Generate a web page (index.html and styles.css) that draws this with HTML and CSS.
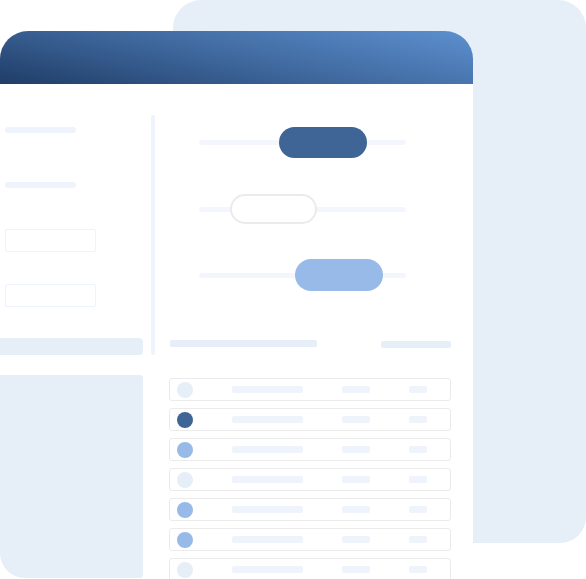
FILE: index.html
```html
<!DOCTYPE html>
<html>
<head>
<meta charset="utf-8">
<link rel="stylesheet" href="styles.css">
</head>
<body>
<div class="stage">
  <div class="back-panel"></div>
  <div class="window">
    <div class="window-header"></div>
    <div class="window-body">
      <aside class="sidebar">
        <div class="side-col">
          <div class="side-line first"></div>
          <div class="side-line"></div>
          <div class="side-input first-input"></div>
          <div class="side-input"></div>
          <div class="side-active"></div>
          <div class="side-panel"></div>
        </div>
        <div class="divider"></div>
      </aside>
      <main class="content">
        <div class="sliders">
          <div class="slider s1"><div class="pill dark"></div></div>
          <div class="slider s2"><div class="pill outline"></div></div>
          <div class="slider s3"><div class="pill light"></div></div>
        </div>
        <div class="table-head">
          <div class="th-bar wide"></div>
          <div class="th-bar narrow"></div>
        </div>
        <div class="rows">
          <div class="row"><span class="dot pale"></span><span class="cell c1"></span><span class="cell c2"></span><span class="cell c3"></span></div>
          <div class="row"><span class="dot dark"></span><span class="cell c1"></span><span class="cell c2"></span><span class="cell c3"></span></div>
          <div class="row"><span class="dot mid"></span><span class="cell c1"></span><span class="cell c2"></span><span class="cell c3"></span></div>
          <div class="row"><span class="dot pale"></span><span class="cell c1"></span><span class="cell c2"></span><span class="cell c3"></span></div>
          <div class="row"><span class="dot mid"></span><span class="cell c1"></span><span class="cell c2"></span><span class="cell c3"></span></div>
          <div class="row"><span class="dot mid"></span><span class="cell c1"></span><span class="cell c2"></span><span class="cell c3"></span></div>
          <div class="row"><span class="dot pale"></span><span class="cell c1"></span><span class="cell c2"></span><span class="cell c3"></span></div>
        </div>
      </main>
    </div>
  </div>
</div>
</body>
</html>
```

FILE: styles.css
```css
html, body {
  margin: 0;
  padding: 0;
  background: #ffffff;
  overflow: hidden;
  font-family: "Liberation Sans", Arial, sans-serif;
}

.stage {
  position: relative;
  width: 586px;
  height: 579px;
  overflow: hidden;
}

.back-panel {
  position: absolute;
  left: 173px;
  top: 0;
  width: 413px;
  height: 543px;
  background: #e6eef8;
  border-radius: 28px 28px 26px 0;
}

.window {
  position: absolute;
  left: 0;
  top: 31px;
  width: 473px;
  height: 560px;
  background: #ffffff;
  border-radius: 28px 28px 0 0;
}

.window-header {
  height: 53px;
  border-radius: 28px 28px 0 0;
  background: linear-gradient(12deg, #1f3d67 0%, #3d659a 45%, #5d90d0 100%);
}

.window-body {
  display: flex;
}

.sidebar {
  display: flex;
  width: 155px;
  flex-shrink: 0;
}

.side-col {
  width: 143px;
  display: flex;
  flex-direction: column;
}

.side-line {
  width: 71px;
  height: 6px;
  margin-left: 5px;
  margin-top: 49px;
  background: #eef3fc;
  border-radius: 3px;
}

.side-line.first {
  margin-top: 43px;
}

.side-input {
  width: 89px;
  height: 21px;
  margin-left: 5px;
  margin-top: 32px;
  border: 1px solid #eef3fc;
  border-radius: 2px;
}

.side-input.first-input {
  margin-top: 41px;
}

.side-active {
  width: 143px;
  height: 17px;
  margin-top: 31px;
  background: #e6eef8;
  border-radius: 0 4px 4px 0;
}

.side-panel {
  width: 143px;
  height: 203px;
  margin-top: 20px;
  background: #e6eef8;
  border-radius: 0 3px 3px 25px;
}

.divider {
  width: 4px;
  height: 240px;
  margin-left: 8px;
  margin-top: 31px;
  background: #eef3fc;
  border-radius: 2px;
}

.content {
  flex: 1;
  display: flex;
  flex-direction: column;
}

.sliders {
  display: flex;
  flex-direction: column;
  margin-left: 44px;
  margin-top: 43px;
  width: 207px;
}

.slider {
  position: relative;
  display: flex;
  align-items: center;
}

.slider::before {
  content: "";
  position: absolute;
  left: 0;
  right: 0;
  top: 50%;
  height: 5px;
  margin-top: -2.5px;
  background: #f3f7fd;
  border-radius: 3px;
}

.pill {
  position: relative;
  width: 88px;
  border-radius: 16px;
  box-sizing: border-box;
}

.s1 .pill { margin-left: 80px; height: 31px; }
.s2 { margin-top: 36px; }
.s2 .pill { margin-left: 31px; width: 87px; height: 30px; }
.s3 { margin-top: 35px; }
.s3 .pill { margin-left: 96px; height: 32px; }

.pill.dark { background: #3e6596; }
.pill.outline { background: #ffffff; border: 2px solid #ebebeb; }
.pill.light { background: #97bae8; }

.table-head {
  display: flex;
  align-items: flex-start;
  margin-top: 49px;
  margin-left: 15px;
  width: 281px;
  justify-content: space-between;
}

.th-bar {
  height: 7px;
  background: #e6eef8;
  border-radius: 2px;
}

.th-bar.wide { width: 147px; }
.th-bar.narrow { width: 70px; margin-top: 1px; }

.rows {
  display: flex;
  flex-direction: column;
  gap: 7px;
  margin-top: 30px;
  margin-left: 14px;
  width: 282px;
}

.row {
  display: flex;
  align-items: center;
  box-sizing: border-box;
  height: 23px;
  border: 1px solid #ebebeb;
  border-radius: 3px;
}

.dot {
  width: 16px;
  height: 16px;
  border-radius: 50%;
  margin-left: 7px;
  flex-shrink: 0;
}

.dot.pale { background: #e6eef8; }
.dot.dark { background: #3e6596; }
.dot.mid { background: #97bae8; }

.cell {
  height: 7px;
  background: #eef3fc;
  border-radius: 2px;
}

.cell.c1 { width: 71px; margin-left: 39px; }
.cell.c2 { width: 28px; margin-left: 39px; }
.cell.c3 { width: 18px; margin-left: 39px; }
```
